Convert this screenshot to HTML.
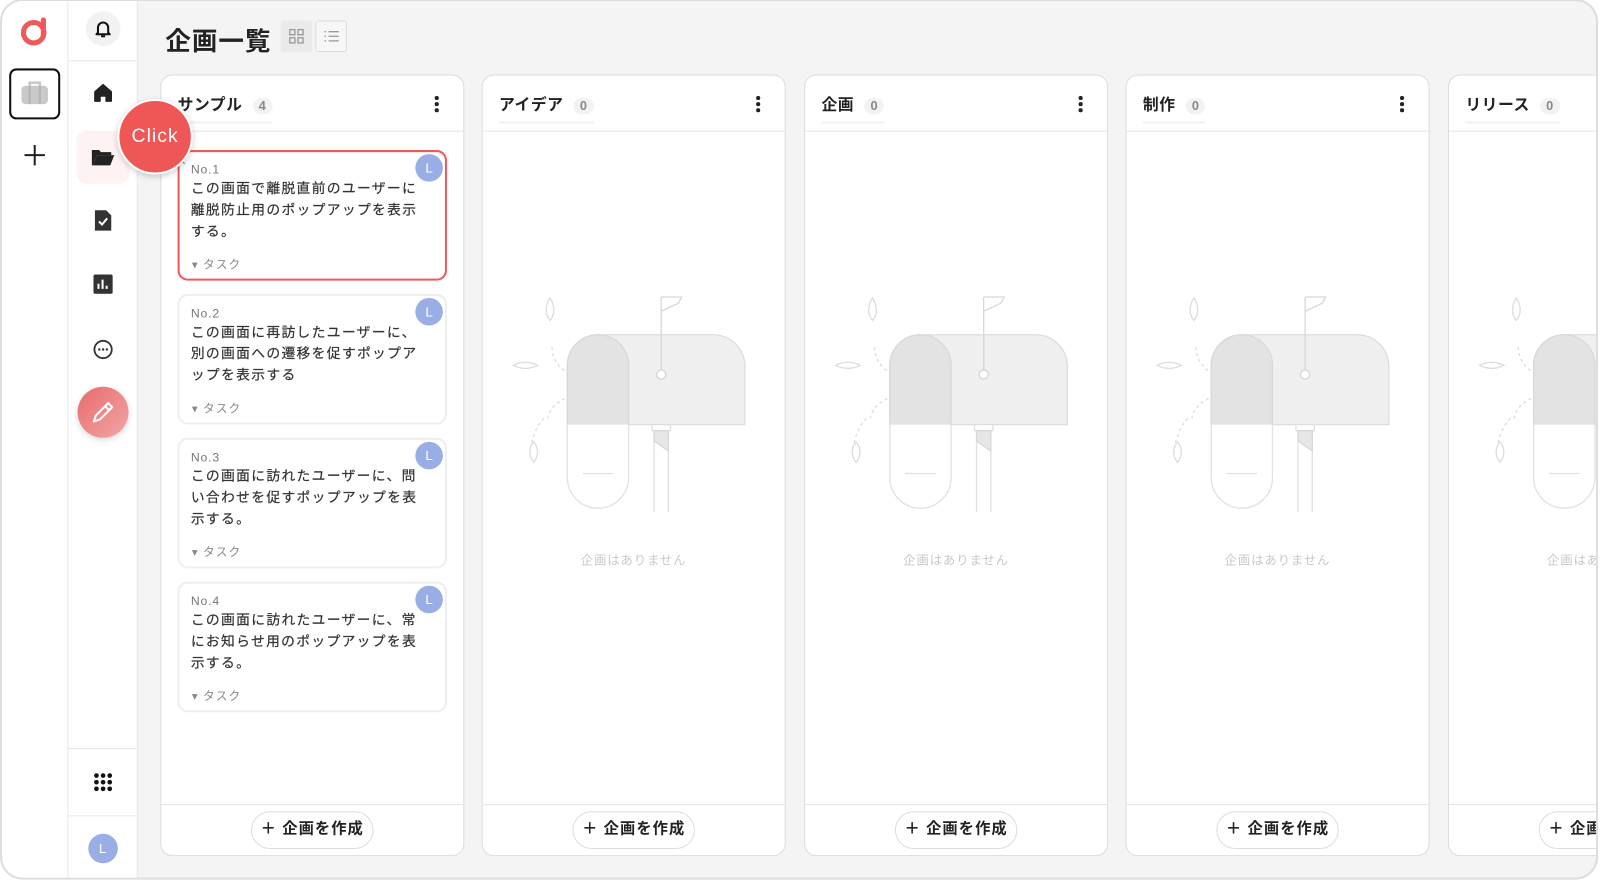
<!DOCTYPE html>
<html><head><meta charset="utf-8"><style>
*{box-sizing:border-box;margin:0;padding:0}
body{width:1600px;height:883px;background:#fff;font-family:"Liberation Sans","Noto Sans CJK JP",sans-serif;position:relative;overflow:hidden;color:#222}
.wrap{position:absolute;left:-1px;top:-2px;width:1568px;height:866px;transform:scale(1.0204);transform-origin:0 0}
.frame{position:absolute;left:1px;top:1px;width:1566px;height:863px;border:2px solid #ddd;border-radius:22px;overflow:hidden;background:#f4f4f4}
.rail{position:absolute;left:0;top:0;width:65px;height:100%;background:#fff;border-right:1px solid #e6e6e6}
.side{position:absolute;left:65px;top:0;width:68px;height:100%;background:#fff;border-right:1px solid #e6e6e6}
.ico{position:absolute;left:50%;transform:translateX(-50%)}
.title{position:absolute;left:160px;top:20px;font-size:25px;font-weight:bold;letter-spacing:1px}
.vbtn{position:absolute;top:19px;width:31px;height:31px;border-radius:3px}
.col{position:absolute;top:72px;width:298px;height:766px;background:#fff;border:1.5px solid #ddd;border-radius:12px;overflow:hidden}
.ch{height:55px;border-bottom:1.5px solid #e6e6e6;position:relative}
.ch .n{position:absolute;left:16px;top:17px;font-size:15.5px;font-weight:bold;padding-bottom:6px;border-bottom:2px solid #f0f0f0;letter-spacing:.5px}
.ch .c{display:inline-block;margin-left:10px;font-size:12.5px;color:#888;background:#f2f2f2;border-radius:10px;padding:1px 6px;font-weight:bold}
.dots{position:absolute;right:24px;top:20px;width:4px}
.dots i{display:block;width:3.5px;height:3.5px;background:#222;border-radius:50%;margin-bottom:2.5px}
.cf{position:absolute;left:0;right:0;bottom:0;height:50px;border-top:1.5px solid #e6e6e6}
.btn{position:absolute;left:50%;transform:translateX(-50%);top:6px;width:120px;height:37px;border:1.5px solid #ddd;border-radius:19px;font-size:15px;font-weight:bold;text-align:center;line-height:34px;background:#fff;letter-spacing:1px}
.empty{position:absolute;left:0;width:100%;top:466px;text-align:center;font-size:12px;color:#c8c8c8;letter-spacing:1px}
.card{position:absolute;left:16px;width:264px;height:128px;border:2px solid #eee;border-radius:10px;background:#fff;padding:10px 11px}
.card .no{font-size:12px;color:#777;letter-spacing:.8px}
.card .t{font-size:13.5px;line-height:21px;color:#333;margin-top:1px;letter-spacing:1.3px;width:236px;-webkit-text-stroke:.2px #333}
.card .tag{position:absolute;left:12px;bottom:6px;font-size:11.5px;color:#888;letter-spacing:1px}
.av{position:absolute;right:2px;top:2px;width:27px;height:27px;border-radius:50%;background:#9aaee6;color:#fff;font-size:13px;text-align:center;line-height:27px}
</style></head><body>
<div class="wrap">
<div class="frame">
 <div class="rail">
  <svg class="ico" style="top:13px" width="32" height="32" viewBox="0 0 32 32"><circle cx="15" cy="18" r="10" fill="none" stroke="#ec5a5a" stroke-width="5"/><rect x="22" y="3" width="5" height="20" rx="2.5" fill="#ec5a5a"/></svg>
  <div style="position:absolute;left:7px;top:66px;width:50px;height:50px;border:2px solid #111;border-radius:7px"></div>
  <svg class="ico" style="top:78px" width="28" height="24" viewBox="0 0 28 24"><rect x="1" y="5" width="26" height="18" rx="4" fill="#c9c9c9"/><path d="M9 5V2h10v3" fill="none" stroke="#c9c9c9" stroke-width="2.5"/><path d="M9 5v18M19 5v18" stroke="#b3b3b3" stroke-width="2"/></svg>
  <svg class="ico" style="top:139px" width="24" height="24" viewBox="0 0 24 24"><path d="M12 2v20M2 12h20" stroke="#222" stroke-width="2"/></svg>
 </div>
 <div class="side">
  <div class="ico" style="top:10px;width:34px;height:34px;border-radius:50%;background:#f2f2f2"></div>
  <svg class="ico" style="top:17px" width="20" height="20" viewBox="0 0 20 20"><path d="M5 14V9a5 5 0 0 1 10 0v5l1.5 1.5h-13z" fill="none" stroke="#111" stroke-width="2" stroke-linejoin="round"/><path d="M8 17.5h4" stroke="#111" stroke-width="2"/></svg>
  <div style="position:absolute;left:0;right:0;top:58px;border-top:1px solid #e6e6e6"></div>
  <svg class="ico" style="top:80px" width="20" height="20" viewBox="0 0 20 20"><path d="M2 9L10 2l8 7v9h-5v-5H7v5H2z" fill="#222" stroke="#222" stroke-width="1.5" stroke-linejoin="round"/></svg>
  <div class="ico" style="top:127px;width:52px;height:52px;border-radius:10px;background:#fdf3f3"></div>
  <svg class="ico" style="top:143px" width="24" height="20" viewBox="0 0 24 20"><path d="M1 3h7l2 2h10v3H6L2 18H1z" fill="#222"/><path d="M6 8h17l-4 10H2z" fill="#222"/></svg>
  <svg class="ico" style="top:204px" width="18" height="22" viewBox="0 0 18 22"><path d="M1 1h11l5 5v15H1z" fill="#333"/><path d="M5 12l3 3 5-6" fill="none" stroke="#fff" stroke-width="2"/></svg>
  <svg class="ico" style="top:268px" width="19" height="19" viewBox="0 0 19 19"><rect width="19" height="19" rx="2" fill="#333"/><path d="M5 14V9M9 14V5M13 14v-3" stroke="#fff" stroke-width="2"/></svg>
  <svg class="ico" style="top:331px" width="21" height="21" viewBox="0 0 21 21"><circle cx="10.5" cy="10.5" r="8.5" fill="none" stroke="#333" stroke-width="1.8"/><circle cx="6.8" cy="10.5" r="1.2" fill="#333"/><circle cx="10.5" cy="10.5" r="1.2" fill="#333"/><circle cx="14.2" cy="10.5" r="1.2" fill="#333"/></svg>
  <div class="ico" style="top:378px;width:50px;height:50px;border-radius:50%;background:linear-gradient(135deg,#e86a6a,#f2a7a7);box-shadow:0 2px 6px rgba(0,0,0,.15)"></div>
  <svg class="ico" style="top:390px" width="26" height="26" viewBox="0 0 26 26"><path d="M4 22l2-6L18 4l4 4L10 20z" fill="none" stroke="#fff" stroke-width="2" stroke-linejoin="round"/><path d="M15 7l4 4" stroke="#fff" stroke-width="2"/></svg>
  <div style="position:absolute;left:0;right:0;top:732px;border-top:1px solid #e6e6e6"></div>
  <svg class="ico" style="top:756px" width="19" height="19" viewBox="0 0 19 19"><g fill="#111"><circle cx="3" cy="3" r="2.3"/><circle cx="9.5" cy="3" r="2.3"/><circle cx="16" cy="3" r="2.3"/><circle cx="3" cy="9.5" r="2.3"/><circle cx="9.5" cy="9.5" r="2.3"/><circle cx="16" cy="9.5" r="2.3"/><circle cx="3" cy="16" r="2.3"/><circle cx="9.5" cy="16" r="2.3"/><circle cx="16" cy="16" r="2.3"/></g></svg>
  <div style="position:absolute;left:0;right:0;top:798px;border-top:1px solid #e6e6e6"></div>
  <div class="ico" style="top:816px;width:29px;height:29px;border-radius:50%;background:#9aaee6;color:#fff;font-size:13px;text-align:center;line-height:29px">L</div>
 </div>
 <div class="title">企画一覧</div>
 <div class="vbtn" style="left:273px;background:#eaeaea"><svg style="margin:8px" width="15" height="15" viewBox="0 0 15 15"><g fill="none" stroke="#999" stroke-width="1.3"><rect x="1" y="1" width="5" height="5"/><rect x="9" y="1" width="5" height="5"/><rect x="1" y="9" width="5" height="5"/><rect x="9" y="9" width="5" height="5"/></g></svg></div>
 <div class="vbtn" style="left:307px;border:1.5px solid #ddd;background:#f7f7f7"><svg style="margin:7px" width="16" height="15" viewBox="0 0 16 15"><g stroke="#999" stroke-width="1.3"><path d="M1 3h1.5M5 3h10M1 7.5h1.5M5 7.5h10M1 12h1.5M5 12h10"/></g></svg></div>

 <div class="col" style="left:155px">
  <div class="ch"><div class="n">サンプル<span class="c">4</span></div><div class="dots"><i></i><i></i><i></i></div></div>
  <div class="card" style="top:73px;border-color:#ec5a5a"><div class="no">No.1</div><div class="t">この画面で離脱直前のユーザーに離脱防止用のポップアップを表示する。</div><div class="tag">▾ タスク</div><div class="av">L</div></div>
  <div class="card" style="top:214px"><div class="no">No.2</div><div class="t">この画面に再訪したユーザーに、別の画面への遷移を促すポップアップを表示する</div><div class="tag">▾ タスク</div><div class="av">L</div></div>
  <div class="card" style="top:355px"><div class="no">No.3</div><div class="t">この画面に訪れたユーザーに、問い合わせを促すポップアップを表示する。</div><div class="tag">▾ タスク</div><div class="av">L</div></div>
  <div class="card" style="top:496px"><div class="no">No.4</div><div class="t">この画面に訪れたユーザーに、常にお知らせ用のポップアップを表示する。</div><div class="tag">▾ タスク</div><div class="av">L</div></div>
  <div class="cf"><div class="btn">＋ 企画を作成</div></div>
 </div>
 <div class="col" style="left:470px"><div class="ch"><div class="n">アイデア<span class="c">0</span></div><div class="dots"><i></i><i></i><i></i></div></div><svg style="position:absolute;left:0;top:204px" width="298" height="270" viewBox="0 -50 298 270"><use href="#mbx"/></svg><div class="empty">企画はありません</div><div class="cf"><div class="btn">＋ 企画を作成</div></div></div>
 <div class="col" style="left:786px"><div class="ch"><div class="n">企画<span class="c">0</span></div><div class="dots"><i></i><i></i><i></i></div></div><svg style="position:absolute;left:0;top:204px" width="298" height="270" viewBox="0 -50 298 270"><use href="#mbx"/></svg><div class="empty">企画はありません</div><div class="cf"><div class="btn">＋ 企画を作成</div></div></div>
 <div class="col" style="left:1101px"><div class="ch"><div class="n">制作<span class="c">0</span></div><div class="dots"><i></i><i></i><i></i></div></div><svg style="position:absolute;left:0;top:204px" width="298" height="270" viewBox="0 -50 298 270"><use href="#mbx"/></svg><div class="empty">企画はありません</div><div class="cf"><div class="btn">＋ 企画を作成</div></div></div>
 <div class="col" style="left:1417px"><div class="ch"><div class="n">リリース<span class="c">0</span></div></div><svg style="position:absolute;left:0;top:204px" width="298" height="270" viewBox="0 -50 298 270"><use href="#mbx"/></svg><div class="empty">企画はありません</div><div class="cf"><div class="btn">＋ 企画を作成</div></div></div>

 <div style="position:absolute;left:167px;top:148px;width:0;height:0;border-left:9px solid transparent;border-top:16px solid #ef5656;transform:rotate(-35deg)"></div>
 <div style="position:absolute;left:113px;top:96px;width:74px;height:74px;border-radius:50%;background:#ef5656;border:2px solid #fff;box-shadow:0 2px 6px rgba(0,0,0,.2);color:#fff;font-size:19px;text-align:center;line-height:70px;letter-spacing:1px">Click</div>
</div>
</div>

<svg width="0" height="0" style="position:absolute"><defs><g id="mbx" fill="none" stroke-width="1.3">
 <path d="M68 12c0 15 10 22 18 28M86 60c-10 4-20 10-22 22M60 82c-8 8-12 20-14 35" stroke="#ddd" stroke-dasharray="3 3"/>
 <path d="M113 0 H226 a31 31 0 0 1 31 31 V88 H83 V31 a30 30 0 0 1 30 -31z" fill="#efefef" stroke="#ddd"/>
 <path d="M83 88 V30 a30 30 0 0 1 60 0 V88z" fill="#e3e3e3" stroke="#d8d8d8"/>
 <path d="M83 88 V140 a30 30 0 0 0 60 0 V88" stroke="#e2e2e2" fill="#fff"/>
 <path d="M98 136h30" stroke="#e0e0e0"/>
 <path d="M175 -37V35" stroke="#d8d8d8"/><path d="M175 -37h20l-3 6-17 8" stroke="#d8d8d8"/>
 <circle cx="175" cy="39" r="4.5" fill="#fff" stroke="#d5d5d5"/>
 <path d="M166 88v6h18v-6M168 94v80M182 94v80" stroke="#e0e0e0"/>
 <path d="M168 94h14v20l-14-10z" fill="#e6e6e6" stroke="#d8d8d8"/>
 <path d="M66 -36c-5 8-5 16 0 22c5-6 5-14 0-22z" stroke="#ddd"/>
 <path d="M30 30c8-4 16-4 24 0c-8 4-16 4-24 0z" stroke="#ddd"/>
 <path d="M50 105c-5 6-5 14 0 20c5-6 5-14 0-20z" stroke="#ddd"/>
</g></defs></svg>
</body></html>
